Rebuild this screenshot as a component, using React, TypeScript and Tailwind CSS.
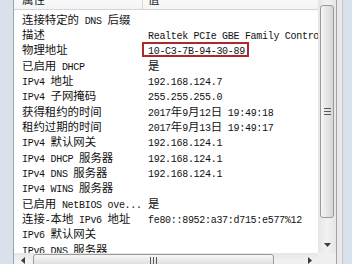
import React from "react";

const rows: [string, string][] = [
  ["连接特定的 DNS 后缀", ""],
  ["描述", "Realtek PCIe GBE Family Controller"],
  ["物理地址", "10-C3-7B-94-30-89"],
  ["已启用 DHCP", "是"],
  ["IPv4 地址", "192.168.124.7"],
  ["IPv4 子网掩码", "255.255.255.0"],
  ["获得租约的时间", "2017年9月12日 19:49:18"],
  ["租约过期的时间", "2017年9月13日 19:49:17"],
  ["IPv4 默认网关", "192.168.124.1"],
  ["IPv4 DHCP 服务器", "192.168.124.1"],
  ["IPv4 DNS 服务器", "192.168.124.1"],
  ["IPv4 WINS 服务器", ""],
  ["已启用 NetBIOS ove...", "是"],
  ["连接-本地 IPv6 地址", "fe80::8952:a37:d715:e577%12"],
  ["IPv6 默认网关", ""],
  ["IPv6 DNS 服务器", ""],
];

function T({ s }: { s: string }) {
  const parts = s.split(/([\x20-\x7E]+)/).filter((p) => p.length > 0);
  return (
    <>
      {parts.map((p, i) =>
        /^[\x20-\x7E]+$/.test(p) ? (
          <span key={i} className="font-['Liberation_Mono'] text-[10px] tracking-[-0.3px]">
            {p}
          </span>
        ) : (
          <span key={i} className="font-['Noto_Sans_CJK_SC'] text-[11.4px]">
            {p}
          </span>
        )
      )}
    </>
  );
}

function Grip({ vertical }: { vertical: boolean }) {
  return vertical ? (
    <svg width="7" height="7" viewBox="0 0 7 7">
      <rect x="0" y="0" width="7" height="1" fill="#5a5a5a" />
      <rect x="0" y="3" width="7" height="1" fill="#5a5a5a" />
      <rect x="0" y="6" width="7" height="1" fill="#5a5a5a" />
    </svg>
  ) : (
    <svg width="7" height="7" viewBox="0 0 7 7">
      <rect x="0" y="0" width="1" height="7" fill="#5a5a5a" />
      <rect x="3" y="0" width="1" height="7" fill="#5a5a5a" />
      <rect x="6" y="0" width="1" height="7" fill="#5a5a5a" />
    </svg>
  );
}

export default function App() {
  return (
    <div className="w-[352px] h-[264px] overflow-hidden flex bg-white text-[#111]">
      {/* left frame */}
      <div className="w-[14px] shrink-0 bg-[#d9e1ea] border-r border-[#9aa5b2]" />
      {/* list view */}
      <div className="w-[322px] shrink-0 flex flex-col overflow-hidden">
        <div className="h-[253px] shrink-0 flex">
          <div className="w-[304px] shrink-0 flex flex-col overflow-hidden bg-white">
            <div className="h-[20px] -mt-[10px] shrink-0 flex items-center whitespace-pre bg-gradient-to-b from-white to-[#f3f4f6] border-b border-[#d5d5d5]">
              <div className="w-[129px] h-full flex items-center pl-[8px] border-r border-[#d8d8d8]">
                <T s="属性" />
              </div>
              <div className="pl-[5px] flex items-center h-full">
                <T s="值" />
              </div>
            </div>
            {rows.map(([k, v], i) => (
              <div key={i} className="relative h-[15.33px] shrink-0 flex items-center whitespace-pre">
                <div className="w-[134px] shrink-0 pl-[8px] overflow-hidden">
                  <T s={k} />
                </div>
                <div className="flex-1 overflow-hidden">
                  <T s={v} />
                </div>
                {i === 2 && (
                  <div className="absolute left-[128px] top-[1px] w-[107px] h-[15px] border-2 border-[#b0282e]" />
                )}
              </div>
            ))}
          </div>
          {/* vertical scrollbar */}
          <div className="w-[18px] shrink-0 flex flex-col bg-gradient-to-r from-[#e6e6e6] via-[#f2f2f2] to-[#e6e6e6] px-[2px]">
            <div className="h-[5px] shrink-0" />
            <div className="h-[213px] shrink-0 rounded-[3px] border border-[#9a9a9a] bg-gradient-to-r from-[#f6f6f6] to-[#d6d6d6] flex items-center justify-center">
              <Grip vertical />
            </div>
            <div className="flex-1" />
            <div className="h-[17px] shrink-0 flex items-center justify-center">
              <svg width="7" height="4" viewBox="0 0 7 4">
                <path d="M0 0 H7 L3.5 4 Z" fill="#3c3c3c" />
              </svg>
            </div>
          </div>
        </div>
        {/* horizontal scrollbar */}
        <div className="h-[17px] shrink-0 flex">
          <div className="w-[304px] shrink-0 flex bg-gradient-to-b from-[#e6e6e6] via-[#f2f2f2] to-[#e6e6e6] pt-[1px]">
            <div className="w-[17px] shrink-0 flex items-start justify-center pt-[3px]">
              <svg width="4" height="7" viewBox="0 0 4 7">
                <path d="M4 0 V7 L0 3.5 Z" fill="#3c3c3c" />
              </svg>
            </div>
            <div className="w-[2px] shrink-0" />
            <div className="w-[241px] shrink-0 h-[15px] rounded-[3px] border border-[#9a9a9a] bg-gradient-to-b from-[#f6f6f6] to-[#d6d6d6] flex items-start justify-center pt-[2px]">
              <Grip vertical={false} />
            </div>
            <div className="flex-1" />
            <div className="w-[17px] shrink-0 flex items-start justify-center pt-[3px]">
              <svg width="4" height="7" viewBox="0 0 4 7">
                <path d="M0 0 V7 L4 3.5 Z" fill="#3c3c3c" />
              </svg>
            </div>
          </div>
          <div className="w-[18px] shrink-0 bg-[#efefef]" />
        </div>
      </div>
      {/* right frame */}
      <div className="w-[16px] shrink-0 flex">
        <div className="w-[1px] bg-[#a3a3a3]" />
        <div className="w-[6px] bg-[#e9e9e9] border-r border-[#c4c4c4]" />
        <div className="flex-1 bg-[#d8e2ee]" />
      </div>
    </div>
  );
}
